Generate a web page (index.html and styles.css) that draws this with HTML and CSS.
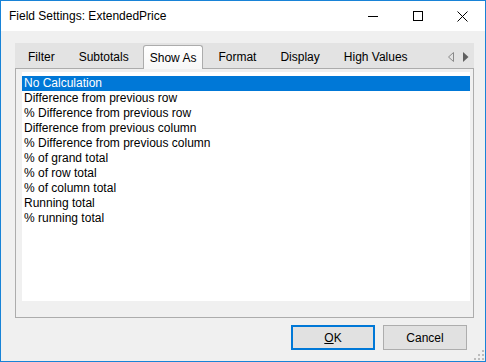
FILE: index.html
```html
<!DOCTYPE html>
<html lang="en">
<head>
  <meta charset="UTF-8">
  <title>Field Settings: ExtendedPrice</title>
  <link rel="stylesheet" href="styles.css">
</head>
<body>

<div class="window">
  <div class="titlebar">
    <span class="title">Field Settings: ExtendedPrice</span>
    <div class="controls">
      <span class="ctl">
        <svg width="10" height="10" viewBox="0 0 10 10"><path d="M0 5.5H10" stroke="#000" stroke-width="1"/></svg>
      </span>
      <span class="ctl">
        <svg width="10" height="10" viewBox="0 0 10 10"><rect x="0.5" y="0.5" width="9" height="9" fill="none" stroke="#000" stroke-width="1"/></svg>
      </span>
      <span class="ctl">
        <svg width="11" height="11" viewBox="0 0 11 11"><path d="M0.5 0.5L10.5 10.5M10.5 0.5L0.5 10.5" stroke="#000" stroke-width="1"/></svg>
      </span>
    </div>
  </div>

  <div class="content">
    <div class="tabs">
      <div class="tab-strip">
        <span class="tab">Filter</span>
        <span class="tab">Subtotals</span>
        <span class="tab active">Show As</span>
        <span class="tab">Format</span>
        <span class="tab">Display</span>
        <span class="tab">High Values</span>
        <span class="scroll">
          <svg width="6" height="10" viewBox="0 0 6 10"><path d="M5.5 0.5V9.5L0.5 5Z" fill="none" stroke="#8a8a8a" stroke-width="1"/></svg>
          <svg width="6" height="10" viewBox="0 0 6 10"><path d="M0 0V10L5.5 5Z" fill="#606060"/></svg>
        </span>
      </div>
      <div class="panel">
        <div class="list">
          <div class="item selected">No Calculation</div>
          <div class="item">Difference from previous row</div>
          <div class="item">% Difference from previous row</div>
          <div class="item">Difference from previous column</div>
          <div class="item">% Difference from previous column</div>
          <div class="item">% of grand total</div>
          <div class="item">% of row total</div>
          <div class="item">% of column total</div>
          <div class="item">Running total</div>
          <div class="item">% running total</div>
        </div>
      </div>
    </div>

    <div class="buttons">
      <button class="btn default"><u>O</u>K</button>
      <button class="btn">Cancel</button>
    </div>
  </div>

  <div class="grip">
    <svg width="10" height="10" viewBox="0 0 10 10" fill="#bcbcbc">
      <rect x="8" y="0" width="2" height="2"/>
      <rect x="4" y="4" width="2" height="2"/>
      <rect x="8" y="4" width="2" height="2"/>
      <rect x="0" y="8" width="2" height="2"/>
      <rect x="4" y="8" width="2" height="2"/>
      <rect x="8" y="8" width="2" height="2"/>
    </svg>
  </div>
</div>

</body>
</html>
```

FILE: styles.css
```css
body {
  margin: 0;
  font-family: "Liberation Sans", Arial, sans-serif;
  font-size: 12px;
  color: #000;
}
.window {
  position: relative;
  width: 486px;
  height: 362px;
  box-sizing: border-box;
  border: 1px solid #1883d7;
  background: #f0f0f0;
  display: flex;
  flex-direction: column;
}
.titlebar {
  height: 30px;
  background: #fff;
  display: flex;
  align-items: center;
  padding-left: 8px;
}
.title {
  flex: 1;
  padding-bottom: 1px;
}
.controls {
  display: flex;
  height: 30px;
}
.ctl {
  width: 45px;
  display: flex;
  align-items: center;
  justify-content: center;
}
.content {
  padding: 12px 11px 0 14px;
}
.tabs {
  display: flex;
  flex-direction: column;
}
.tab-strip {
  height: 25px;
  background: #e3e3e3;
  display: flex;
  align-items: stretch;
  padding-left: 1px;
  position: relative;
}
.tab {
  padding: 3px 12px 0;
  display: flex;
  align-items: center;
}
.tab.active {
  margin: 2px 0 -1px 2px;
  padding: 1px 6px 0;
  background: linear-gradient(#ffffff, #f7f7f7);
  border: 1px solid #acacac;
  border-bottom: none;
  border-radius: 3px 3px 0 0;
  position: relative;
  z-index: 1;
}
.tab.active + .tab {
  padding-left: 15px;
}
.scroll {
  margin-left: auto;
  display: flex;
  align-items: center;
  gap: 9px;
  padding: 2px 5px 0 0;
}
.panel {
  height: 250px;
  box-sizing: border-box;
  border: 1px solid #acacac;
  padding: 3px 3px 16px 6px;
}
.list {
  height: 100%;
  background: #fff;
  padding-top: 4px;
  box-sizing: border-box;
}
.item {
  height: 15px;
  line-height: 15px;
  padding-left: 2px;
  white-space: nowrap;
}
.item.selected {
  background: #0078d7;
  color: #fff;
}
.buttons {
  display: flex;
  justify-content: flex-end;
  gap: 8px;
  padding: 7px 7px 0 0;
}
.btn {
  width: 84px;
  height: 25px;
  font-family: inherit;
  font-size: 12px;
  background: #e1e1e1;
  border: 1px solid #adadad;
  padding: 0;
  color: #000;
}
.btn.default {
  border: 2px solid #0078d7;
}
.grip {
  position: absolute;
  right: 1px;
  bottom: 1px;
  line-height: 0;
}
```
